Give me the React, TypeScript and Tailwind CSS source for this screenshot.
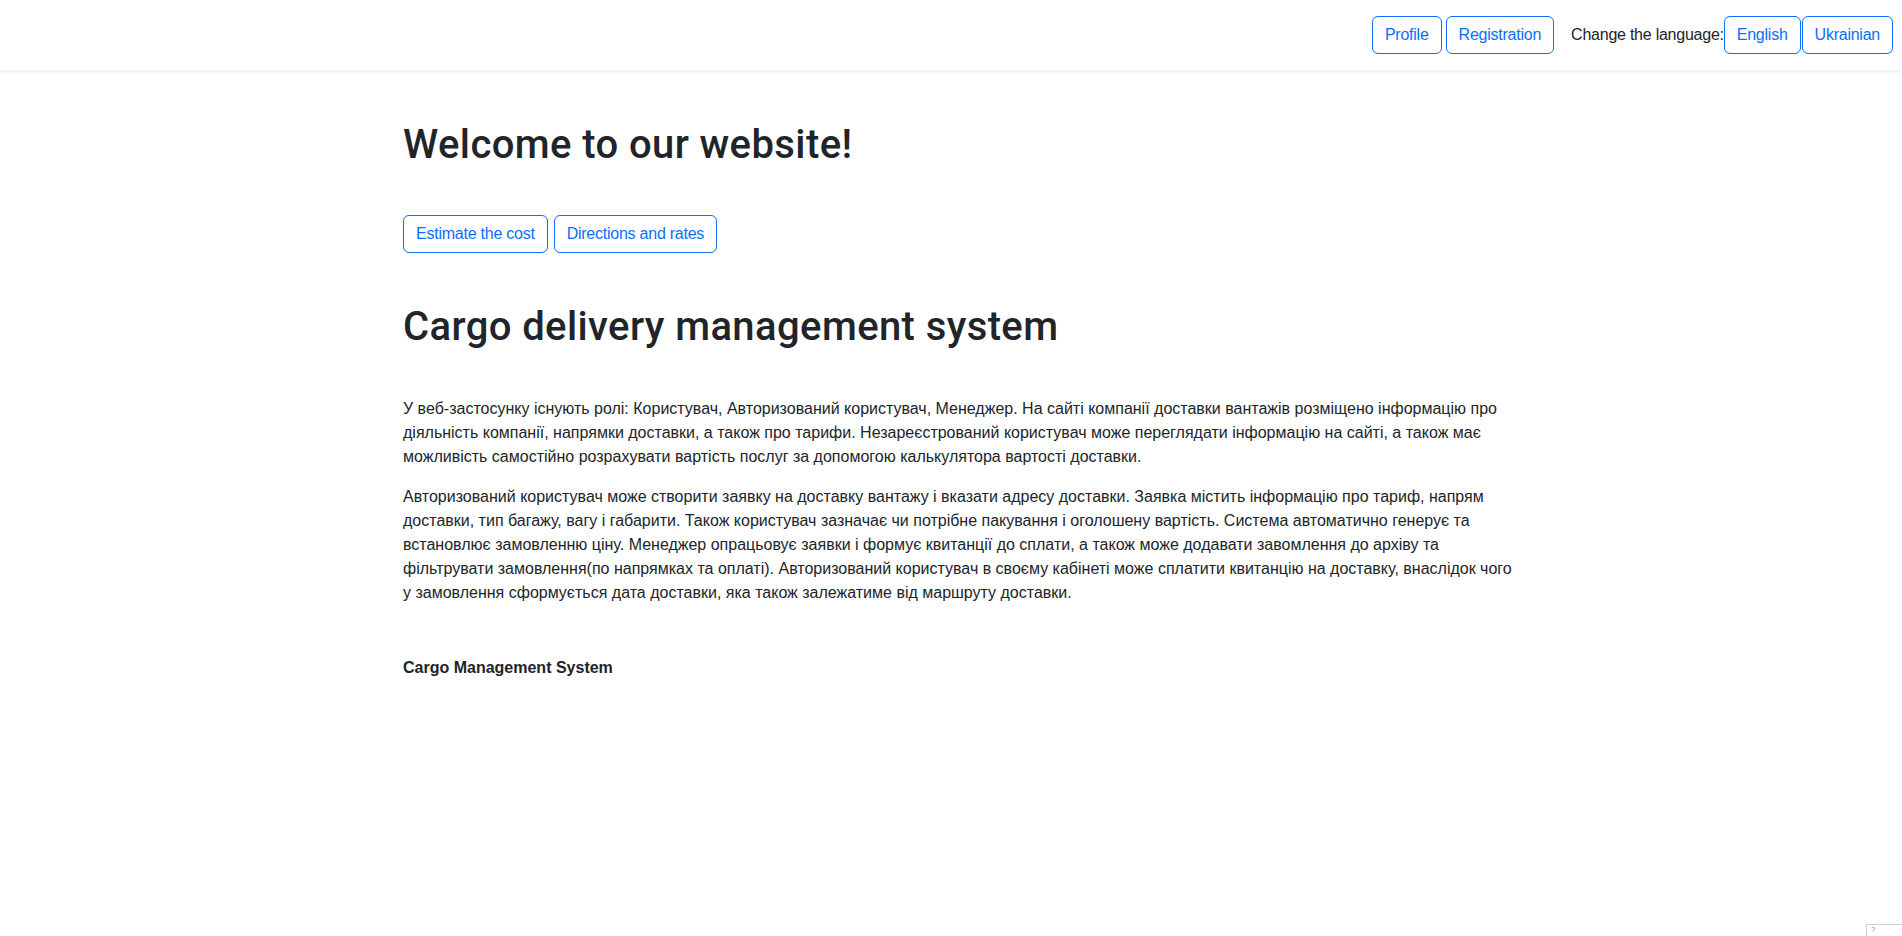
const btn =
  "inline-block rounded-md border border-[#0d6efd] bg-white px-3 py-1.5 text-base leading-6 tracking-[-0.015em] text-[#0d6efd] hover:bg-[#0d6efd] hover:text-white";

const heading = "text-[40px] font-medium leading-[1.2] tracking-[0.01em]";

function Navbar() {
  return (
    <nav className="flex h-[70px] items-center justify-end bg-white pr-[9px] shadow-[0_2px_4px_rgba(0,0,0,0.08)]">
      <div className="flex items-center gap-1">
        <button className={btn}>Profile</button>
        <button className={btn}>Registration</button>
      </div>
      <span className="ml-[17px] text-base tracking-[-0.015em] text-[#212529]">Change the language:</span>
      <div className="flex items-center gap-px">
        <button className={btn}>English</button>
        <button className={btn}>Ukrainian</button>
      </div>
    </nav>
  );
}

export default function App() {
  return (
    <div
      className="min-h-screen bg-white text-[#212529]"
      style={{ fontFamily: '"Liberation Sans", Arial, sans-serif' }}
    >
      <Navbar />

      <main className="ml-[403px] w-[1116px]">
        <h1 className={`mt-[51px] ${heading}`} style={{ fontFamily: 'Roboto, "Liberation Sans", sans-serif' }}>
          Welcome to our website!
        </h1>

        <div className="mt-[46px] flex gap-1.5">
          <button className={btn}>Estimate the cost</button>
          <button className={btn}>Directions and rates</button>
        </div>

        <h1 className={`mt-[50px] ${heading}`} style={{ fontFamily: 'Roboto, "Liberation Sans", sans-serif' }}>
          Cargo delivery management system
        </h1>

        <div className="mt-[46px] text-base leading-6">
          <p className="mb-4 whitespace-nowrap">
            У веб-застосунку існують ролі: Користувач, Авторизований користувач, Менеджер. На сайті компанії доставки вантажів розміщено інформацію про
            <br />
            діяльність компанії, напрямки доставки, а також про тарифи. Незареєстрований користувач може переглядати інформацію на сайті, а також має
            <br />
            можливість самостійно розрахувати вартість послуг за допомогою калькулятора вартості доставки.
          </p>
          <p className="mb-4 whitespace-nowrap">
            Авторизований користувач може створити заявку на доставку вантажу і вказати адресу доставки. Заявка містить інформацію про тариф, напрям
            <br />
            доставки, тип багажу, вагу і габарити. Також користувач зазначає чи потрібне пакування і оголошену вартість. Система автоматично генерує та
            <br />
            встановлює замовленню ціну. Менеджер опрацьовує заявки і формує квитанції до сплати, а також може додавати завомлення до архіву та
            <br />
            фільтрувати замовлення(по напрямках та оплаті). Авторизований користувач в своєму кабінеті може сплатити квитанцію на доставку, внаслідок чого
            <br />
            у замовлення сформується дата доставки, яка також залежатиме від маршруту доставки.
          </p>
        </div>

        <footer className="pt-[35px]">
          <p className="text-base font-bold leading-6">Cargo Management System</p>
        </footer>
      </main>

      <div className="fixed bottom-0 right-0 flex h-[12px] w-[36px] items-start border-l border-t border-[#d0d0d0] bg-white pl-1 text-[8px] leading-[10px] text-[#888]">
        ?
      </div>
    </div>
  );
}
